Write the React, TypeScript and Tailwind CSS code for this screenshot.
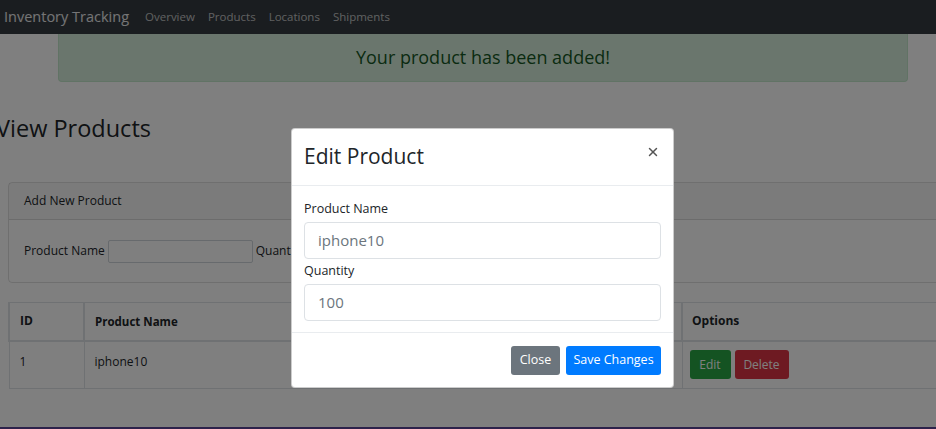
import { X } from 'lucide-react';

const font = { fontFamily: '"Open Sans", "Noto Sans", sans-serif' };

const App = () => {
  return (
    <div
      className="relative w-[936px] h-[429px] overflow-hidden bg-white text-[#212529]"
      style={font}
    >
      {/* Navbar */}
      <nav className="h-[34px] bg-[#343a40] flex items-center pl-[4px]">
        <span className="text-[14.5px] text-white/90 mr-[16px]">Inventory Tracking</span>
        <div className="flex gap-[13px] text-[11.5px] text-white/70">
          <span>Overview</span>
          <span>Products</span>
          <span>Locations</span>
          <span>Shipments</span>
        </div>
      </nav>

      {/* Alert */}
      <div className="mx-[58px] w-[850px] h-[48px] bg-[#d4edda] border border-[#c3e6cb] border-t-0 rounded-b-[4px] flex items-center justify-center">
        <span className="text-[18px] text-[#155724]">Your product has been added!</span>
      </div>

      {/* Page content */}
      <div className="pl-[8px]">
        <h1 className="mt-[31px] -ml-[12px] text-[23.5px] leading-[30px] font-medium">View Products</h1>

        {/* Add product card */}
        <div className="mt-[39px] w-[1000px] border border-black/[0.125] rounded-[4px]">
          <div className="h-[37px] bg-black/[0.03] border-b border-black/[0.125] flex items-center px-[15px] text-[12px]">
            Add New Product
          </div>
          <div className="h-[62px] flex items-center px-[15px] text-[12px] gap-[3px]">
            <span>Product Name</span>
            <div className="w-[145px] h-[23px] border border-[#ced4da] rounded-[2px] bg-white" />
            <span>Quantity</span>
          </div>
        </div>

        {/* Products table */}
        <table className="mt-[19px] w-[1000px] border-collapse text-[12px]">
          <thead>
            <tr className="h-[38px] font-bold">
              <th className="w-[75px] border-[2px] border-[#dee2e6] border-t-[1px] text-left px-[10px]">ID</th>
              <th className="w-[598px] border-[2px] border-[#dee2e6] border-t-[1px] text-left px-[10px] text-[11.5px]">Product Name</th>
              <th className="border-[2px] border-[#dee2e6] border-t-[1px] text-left px-[9px]">Options</th>
            </tr>
          </thead>
          <tbody>
            <tr className="h-[48px]">
              <td className="border border-[#dee2e6] px-[10px] align-top pt-[11px]">1</td>
              <td className="border border-[#dee2e6] px-[10px] align-top pt-[11px]">iphone10</td>
              <td className="border border-[#dee2e6] px-[7px]">
                <div className="flex gap-[4px]">
                  <button className="w-[41px] h-[29px] bg-[#28a745] text-white rounded-[3px]">Edit</button>
                  <button className="w-[54px] h-[29px] bg-[#dc3545] text-white rounded-[3px]">Delete</button>
                </div>
              </td>
            </tr>
          </tbody>
        </table>
      </div>

      {/* Bottom edge */}
      <div className="absolute left-0 right-0 bottom-0 h-[2px] bg-[#5a4596]" />

      {/* Backdrop */}
      <div className="absolute inset-0 bg-black/50" />

      {/* Modal */}
      <div className="absolute left-[291px] top-[128px] w-[383px] bg-white rounded-[4px] border border-black/20">
        <div className="h-[57px] border-b border-[#e9ecef] flex items-center justify-between pl-[12px] pr-[13px]">
          <h2 className="text-[21px] font-normal text-[#212529]">Edit Product</h2>
          <X className="w-[14px] h-[14px] text-[#555] -mt-[10px]" strokeWidth={2.5} />
        </div>
        <div className="px-[12px] pt-[14px] pb-[11px] text-[12.5px]">
          <label className="block leading-[18px]">Product Name</label>
          <div className="mt-[4px] h-[37px] border border-[#dde1e5] rounded-[4px] flex items-center px-[13px] text-[15px] text-[#6c757d]">
            iphone10
          </div>
          <label className="block mt-[2px] leading-[20px]">Quantity</label>
          <div className="mt-[3px] h-[37px] border border-[#dde1e5] rounded-[4px] flex items-center px-[13px] text-[15px] text-[#6c757d]">
            100
          </div>
        </div>
        <div className="h-[55px] border-t border-[#e9ecef] flex items-center justify-end gap-[6px] pr-[12px] text-[12.5px]">
          <button className="w-[49px] h-[29px] bg-[#6c757d] text-white rounded-[3px]">Close</button>
          <button className="w-[95px] h-[29px] bg-[#007bff] text-white rounded-[3px]">Save Changes</button>
        </div>
      </div>
    </div>
  );
};

export default App;
